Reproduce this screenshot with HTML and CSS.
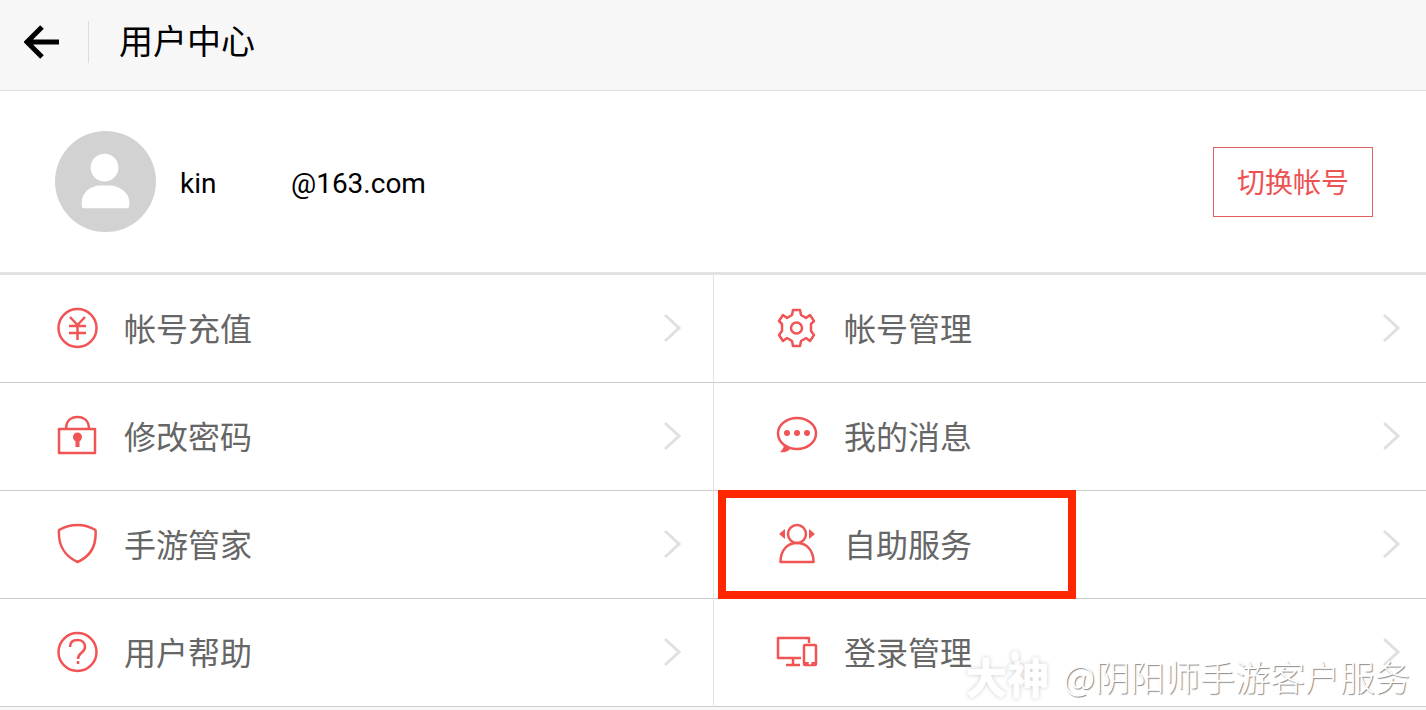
FILE: index.html
```
<!DOCTYPE html>
<html lang="zh-CN">
<head>
  <meta charset="UTF-8" />
  <meta name="viewport" content="width=device-width, initial-scale=1.0"/>
  <title>用户中心</title>
  <link rel="stylesheet" href="styles.css">
</head>
<body>
  <svg class="defs" aria-hidden="true">
    <symbol id="arrow" viewBox="0 0 18 30"><path d="M2 2l14 13L2 28"/></symbol>
  </svg>

  <header class="topbar">
    <button class="back" aria-label="返回">
      <svg width="36" height="34" viewBox="0 0 36 34"><path d="M18 2L3 17l15 15M3 17h32"/></svg>
    </button>
    <h1>用户中心</h1>
  </header>

  <main>
    <section class="profile">
      <svg class="avatar" viewBox="0 0 102 102">
        <circle cx="51" cy="51" r="51" fill="#d2d2d2"/>
        <circle cx="50" cy="37" r="14" fill="#fff"/>
        <path d="M27 76v-4c0-10 9-17 19-17h9c10 0 20 7 20 17v4c0 1-1 2-2 2H29c-1 0-2-1-2-2z" fill="#fff"/>
      </svg>
      <div class="account"><span class="masked">kin</span><span>@163.com</span></div>
      <button class="switch">切换帐号</button>
    </section>

    <nav class="menu">
      <a class="item" href="#">
        <svg class="icon" viewBox="0 0 42 42"><circle cx="21.500" cy="21" r="19"/><path d="M14 10l7.500 8 7.500-8M13 19h17M13 26h17M21.500 18v15"/></svg>
        <span class="label">帐号充值</span>
        <svg class="arrow"><use href="#arrow"/></svg>
      </a>
      <a class="item" href="#">
        <svg class="icon" viewBox="0 0 42 42"><path d="M17 3H24L25 8L30 11L34 8L38 14L35 17V24L38 28L34 34L30 31L25 34L24 39H17L16 34L11 31L7 34L3 28L6 24V17L3 14L7 8L11 11L16 8Z"/><circle cx="20.500" cy="21" r="5.500"/></svg>
        <span class="label">帐号管理</span>
        <svg class="arrow"><use href="#arrow"/></svg>
      </a>
      <a class="item" href="#">
        <svg class="icon" viewBox="0 0 42 42"><path d="M3 14h36v24H3zM10 14c0-8 5-12 11.500-12S33 6 33 14"/><circle class="solid" cx="21.500" cy="22" r="4.500"/><path class="thick" d="M21.500 24v8"/></svg>
        <span class="label">修改密码</span>
        <svg class="arrow"><use href="#arrow"/></svg>
      </a>
      <a class="item" href="#">
        <svg class="icon" viewBox="0 0 42 42"><ellipse cx="21" cy="18.500" rx="19" ry="15.500"/><path class="solid" d="M8 29c0 4-2 6-4 8 4 1 8 0 11-4z"/><circle class="solid" cx="11" cy="18" r="3"/><circle class="solid" cx="21" cy="18" r="3"/><circle class="solid" cx="31" cy="18" r="3"/></svg>
        <span class="label">我的消息</span>
        <svg class="arrow"><use href="#arrow"/></svg>
      </a>
      <a class="item" href="#">
        <svg class="icon" viewBox="0 0 42 42"><path d="M21.500 2c7 0 13 2 18 5 1 14-4 26-18 32C8 33 2 21 3 7c5-3 11-5 18.500-5z"/></svg>
        <span class="label">手游管家</span>
        <svg class="arrow"><use href="#arrow"/></svg>
      </a>
      <a class="item marked" href="#">
        <svg class="icon" viewBox="0 0 42 42"><circle cx="21" cy="11" r="9"/><path d="M4.500 39c0-12 7-19 16.500-19s16.500 7 16.500 19z"/><path class="solid" d="M9 6v10l-6-5zM33 6v10l6-5z"/></svg>
        <span class="label">自助服务</span>
        <svg class="arrow"><use href="#arrow"/></svg>
      </a>
      <a class="item" href="#">
        <svg class="icon" viewBox="0 0 42 42"><circle cx="21.500" cy="21" r="19"/><path d="M14 16c0-5 3-7 7.500-7s7.500 3 7.500 7c0 6-7 5-7 12M22 30v3"/></svg>
        <span class="label">用户帮助</span>
        <svg class="arrow"><use href="#arrow"/></svg>
      </a>
      <a class="item" href="#">
        <svg class="icon" viewBox="0 0 42 42"><path d="M33 12V7H2v20h23M17 27v7M10 34h14"/><rect x="28" y="14" width="12" height="20" rx="1"/><path class="thick" d="M28 33h12"/><circle cx="34" cy="32" r="1.500" class="dot"/></svg>
        <span class="label">登录管理</span>
        <svg class="arrow"><use href="#arrow"/></svg>
      </a>
    </nav>
  </main>

  <div class="watermark"><b>大神</b><span>@阴阳师手游客户服务</span></div>
</body>
</html>
```
FILE: styles.css
```
* { box-sizing: border-box; }
body { margin: 0; min-height: 100vh; background: #f7f7f7; font-family: Roboto, 'Noto Sans CJK SC', sans-serif; color: #000; overflow: hidden; }
button { font-family: inherit; cursor: pointer; }
.defs { display: none; }

.topbar { display: flex; align-items: center; height: 91px; padding: 0 24px 6px; border-bottom: 1px solid #ddd; background: #f7f7f7; }
.back { display: flex; align-items: center; height: 42px; padding: 0 28px 0 0; border: 0; border-right: 1px solid #ddd; background: none; }
.back svg { fill: none; stroke: #000; stroke-width: 5; }
h1 { margin: 0 0 0 30px; font-size: 34px; line-height: 42px; font-weight: 400; }

.profile { display: flex; align-items: center; height: 184px; padding: 0 53px 0 55px; border-bottom: 3px solid #e2e2e2; background: #fff; }
.avatar { width: 101px; height: 101px; }
.account { display: flex; gap: 76px; margin-left: 24px; padding-top: 4px; font-size: 28px; line-height: 36px; }
.masked { width: 35px; overflow: hidden; }
.switch { width: 160px; height: 70px; margin-left: auto; padding: 0 0 2px; border: 1px solid #e06060; background: #fff; color: #ee5252; font-size: 28px; }

.menu { display: grid; grid-template-columns: 1fr 1fr; background: #fff; }
.item { position: relative; display: flex; align-items: center; height: 108px; padding: 0 32px 2px 56px; border-bottom: 1px solid #ccc; color: #666; font-size: 32px; line-height: 48px; text-decoration: none; }
.item:nth-child(even) { padding: 0 26px 2px 62px; border-left: 1px solid #e4e4e4; }
.label { padding-top: 4px; }
.icon { width: 42px; height: 42px; margin-right: 26px; fill: none; stroke: #f05454; stroke-width: 2.5; stroke-linejoin: round; }
.icon .solid { fill: #f05454; stroke: none; }
.icon .thick { stroke-width: 4; }
.icon .dot { fill: #fff; stroke: none; }
.arrow { width: 18px; height: 30px; margin-left: auto; fill: none; stroke: #e0e0e0; stroke-width: 3; }

/* red frame over the highlighted entry */
.marked::after { content: ''; box-sizing: border-box; position: absolute; top: -1px; left: 4px; width: 358px; height: 109px; border: 8px solid #ff2600; }

.watermark { position: absolute; right: 16px; bottom: 9px; display: flex; align-items: center; gap: 14px; color: #fff; font-size: 35px; line-height: 50px; font-family: 'Noto Sans CJK SC', sans-serif; font-weight: 300; text-shadow: 1px 1px 1px #888; pointer-events: none; }
.watermark b { position: relative; font-size: 42px; font-weight: 900; text-shadow: 0 0 4px #ccc; }
/* drop above the logo */
.watermark b::before { content: ''; position: absolute; top: 0; left: 46px; width: 8px; height: 10px; border-radius: 50%; background: #fff; box-shadow: 0 0 4px #ccc; }
```
